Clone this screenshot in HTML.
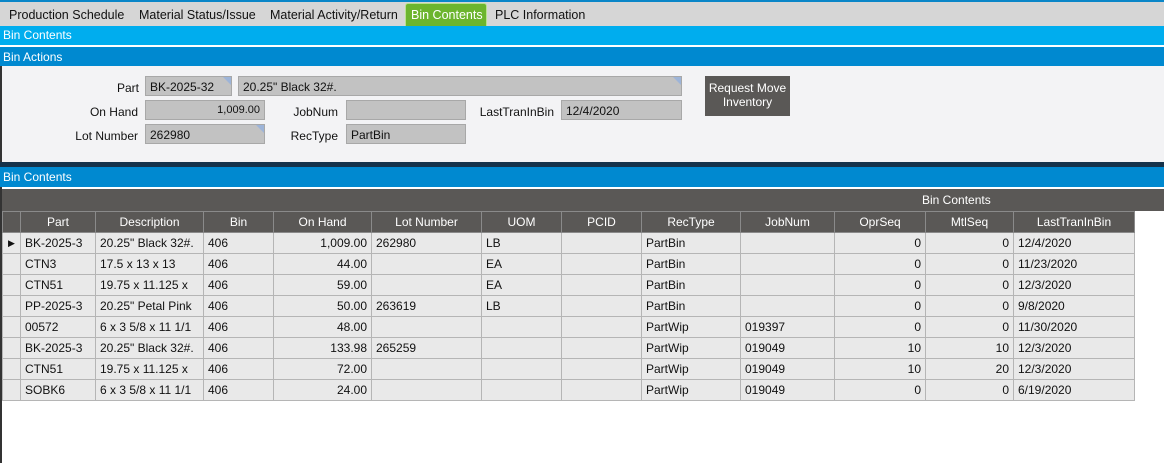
<!DOCTYPE html>
<html><head><style>
*{margin:0;padding:0;box-sizing:border-box}
body{width:1164px;height:463px;overflow:hidden;background:#fff;font-family:"Liberation Sans",Arial,sans-serif;font-size:12px;color:#111;position:relative}
.a{position:absolute}
.tab{position:absolute;top:8px;font-size:12.5px;color:#111}
.bar{position:absolute;left:0;width:1164px;color:#fff;font-size:12px;padding-left:3px}
.lbl{position:absolute;text-align:right;font-size:12px}
.fld{position:absolute;background:#c2c2c2;border:1px solid #a8a8a8;height:20px;padding:3px 4px;font-size:12px}
.tri{position:absolute;right:0;top:0;width:0;height:0;border-top:8px solid #9db4d8;border-left:8px solid transparent}
table{position:absolute;left:2px;top:211px;border-collapse:collapse;font-size:12px}
td,th{border:1px solid #b5b5b5;height:21px;padding:0 4px;white-space:nowrap;overflow:hidden}
th{background:#5a5856;color:#fff;font-weight:normal;border-color:#8a8a8a;text-align:center}
td{background:#e9e9e9}
.r{text-align:right}
</style></head><body>
<div class="a" style="left:0;top:0;width:1164px;height:2px;background:#0a86c8"></div>
<div class="a" style="left:0;top:2px;width:1164px;height:24px;background:#d6d6d6"></div>
<div class="tab" style="left:9px">Production Schedule</div>
<div class="tab" style="left:139px">Material Status/Issue</div>
<div class="tab" style="left:270px">Material Activity/Return</div>
<div class="a" style="left:405px;top:3px;width:82px;height:24px;background:#6cb52e;border:1px solid #b9e28f;border-bottom:none;border-radius:3px 3px 0 0;color:#fff;font-size:12.5px;padding:4px 0 0 5px">Bin Contents</div>
<div class="tab" style="left:495px">PLC Information</div>
<div class="bar" style="top:26px;height:19px;background:#00adee;padding-top:2px">Bin Contents</div>
<div class="bar" style="top:47px;height:19px;background:#0089d0;padding-top:3px">Bin Actions</div>
<div class="a" style="left:0;top:66px;width:1164px;height:96px;background:#f3f3f5;border-left:2px solid #333"></div>
<div class="lbl" style="left:60px;width:79px;top:81px">Part</div>
<div class="fld" style="left:145px;top:76px;width:87px">BK-2025-32<div class="tri"></div></div>
<div class="fld" style="left:238px;top:76px;width:444px">20.25" Black 32#.<div class="tri"></div></div>
<div class="lbl" style="left:40px;width:98px;top:105px">On Hand</div>
<div class="fld" style="left:145px;top:100px;width:120px;text-align:right;font-size:11px">1,009.00</div>
<div class="lbl" style="left:260px;width:78px;top:105px">JobNum</div>
<div class="fld" style="left:346px;top:100px;width:120px"></div>
<div class="lbl" style="left:460px;width:94px;top:105px">LastTranInBin</div>
<div class="fld" style="left:561px;top:100px;width:121px">12/4/2020</div>
<div class="lbl" style="left:40px;width:98px;top:129px">Lot Number</div>
<div class="fld" style="left:145px;top:124px;width:120px">262980<div class="tri"></div></div>
<div class="lbl" style="left:260px;width:78px;top:129px">RecType</div>
<div class="fld" style="left:346px;top:124px;width:120px">PartBin</div>
<div class="a" style="left:705px;top:76px;width:85px;height:40px;background:#5a5856;color:#fff;text-align:center;padding-top:5px;line-height:14px">Request Move<br>Inventory</div>
<div class="a" style="left:0;top:162px;width:1164px;height:5px;background:#15324a"></div>
<div class="bar" style="top:167px;height:20px;background:#0089d0;padding-top:3px">Bin Contents</div>
<div class="a" style="left:0;top:187px;width:2px;height:276px;background:#333"></div>
<div class="a" style="left:2px;top:189px;width:1162px;height:22px;background:#5a5856;color:#fff;padding:4px 0 0 920px">Bin Contents</div>
<table>
<tr><th style="width:18px"></th><th style="width:75px">Part</th><th style="width:108px">Description</th><th style="width:70px">Bin</th><th style="width:98px">On Hand</th><th style="width:110px">Lot Number</th><th style="width:80px">UOM</th><th style="width:80px">PCID</th><th style="width:99px">RecType</th><th style="width:94px">JobNum</th><th style="width:91px">OprSeq</th><th style="width:88px">MtlSeq</th><th style="width:121px">LastTranInBin</th></tr>
<tr><td style="font-size:9px;padding:0 5px">&#9654;</td><td>BK-2025-3</td><td>20.25" Black 32#.</td><td>406</td><td class="r">1,009.00</td><td>262980</td><td>LB</td><td></td><td>PartBin</td><td></td><td class="r">0</td><td class="r">0</td><td>12/4/2020</td></tr>
<tr><td></td><td>CTN3</td><td>17.5 x 13 x 13</td><td>406</td><td class="r">44.00</td><td></td><td>EA</td><td></td><td>PartBin</td><td></td><td class="r">0</td><td class="r">0</td><td>11/23/2020</td></tr>
<tr><td></td><td>CTN51</td><td>19.75 x 11.125 x</td><td>406</td><td class="r">59.00</td><td></td><td>EA</td><td></td><td>PartBin</td><td></td><td class="r">0</td><td class="r">0</td><td>12/3/2020</td></tr>
<tr><td></td><td>PP-2025-3</td><td>20.25" Petal Pink</td><td>406</td><td class="r">50.00</td><td>263619</td><td>LB</td><td></td><td>PartBin</td><td></td><td class="r">0</td><td class="r">0</td><td>9/8/2020</td></tr>
<tr><td></td><td>00572</td><td>6 x 3 5/8 x 11 1/1</td><td>406</td><td class="r">48.00</td><td></td><td></td><td></td><td>PartWip</td><td>019397</td><td class="r">0</td><td class="r">0</td><td>11/30/2020</td></tr>
<tr><td></td><td>BK-2025-3</td><td>20.25" Black 32#.</td><td>406</td><td class="r">133.98</td><td>265259</td><td></td><td></td><td>PartWip</td><td>019049</td><td class="r">10</td><td class="r">10</td><td>12/3/2020</td></tr>
<tr><td></td><td>CTN51</td><td>19.75 x 11.125 x</td><td>406</td><td class="r">72.00</td><td></td><td></td><td></td><td>PartWip</td><td>019049</td><td class="r">10</td><td class="r">20</td><td>12/3/2020</td></tr>
<tr><td></td><td>SOBK6</td><td>6 x 3 5/8 x 11 1/1</td><td>406</td><td class="r">24.00</td><td></td><td></td><td></td><td>PartWip</td><td>019049</td><td class="r">0</td><td class="r">0</td><td>6/19/2020</td></tr>
</table>
</body></html>
